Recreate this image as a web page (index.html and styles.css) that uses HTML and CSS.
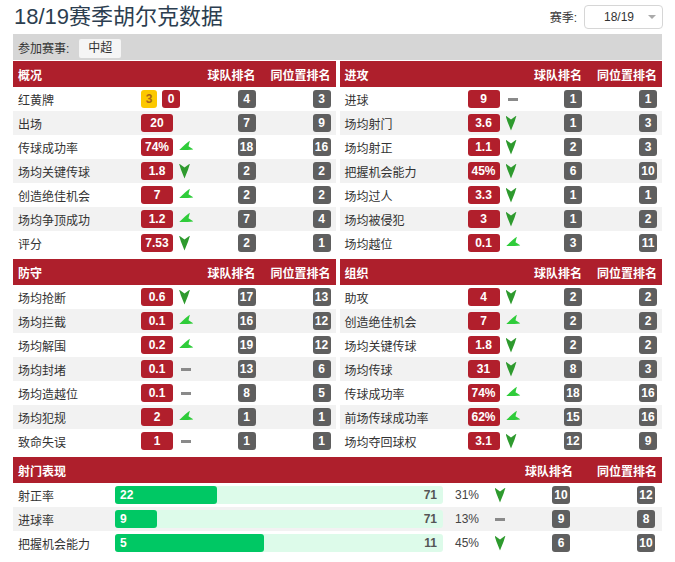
FILE: index.html
```html
<!DOCTYPE html>
<html lang="zh">
<head>
<meta charset="utf-8">
<title>18/19赛季胡尔克数据</title>
<link rel="stylesheet" href="styles.css">
</head>
<body>
<div class="page">
  <div class="topbar">
    <h1 class="title">18/19赛季胡尔克数据</h1>
    <div class="season">
      <span class="season-label">赛季:</span>
      <div class="select"><span class="select-value">18/19</span><span class="caret"></span></div>
    </div>
  </div>

  <div class="comp-bar">
    <span class="comp-label">参加赛事:</span>
    <span class="chip">中超</span>
  </div>

  <div class="tables">
    <!-- 概况 -->
    <div class="table">
      <div class="thead"><span class="th-title">概况</span><span class="th">球队排名</span><span class="th">同位置排名</span></div>
      <div class="row"><span class="label">红黄牌</span><span class="val"><span class="card yellow">3</span><span class="card red">0</span></span><span class="rk"><b>4</b></span><span class="rk"><b>3</b></span></div>
      <div class="row"><span class="label">出场</span><span class="val"><span class="badge">20</span></span><span class="rk"><b>7</b></span><span class="rk"><b>9</b></span></div>
      <div class="row"><span class="label">传球成功率</span><span class="val"><span class="badge">74%</span><i class="ar side"></i></span><span class="rk"><b>18</b></span><span class="rk"><b>16</b></span></div>
      <div class="row"><span class="label">场均关键传球</span><span class="val"><span class="badge">1.8</span><i class="ar down"></i></span><span class="rk"><b>2</b></span><span class="rk"><b>2</b></span></div>
      <div class="row"><span class="label">创造绝佳机会</span><span class="val"><span class="badge">7</span><i class="ar side"></i></span><span class="rk"><b>2</b></span><span class="rk"><b>2</b></span></div>
      <div class="row"><span class="label">场均争顶成功</span><span class="val"><span class="badge">1.2</span><i class="ar side"></i></span><span class="rk"><b>7</b></span><span class="rk"><b>4</b></span></div>
      <div class="row"><span class="label">评分</span><span class="val"><span class="badge">7.53</span><i class="ar down"></i></span><span class="rk"><b>2</b></span><span class="rk"><b>1</b></span></div>
    </div>

    <!-- 进攻 -->
    <div class="table">
      <div class="thead"><span class="th-title">进攻</span><span class="th">球队排名</span><span class="th">同位置排名</span></div>
      <div class="row"><span class="label">进球</span><span class="val"><span class="badge">9</span><i class="dash"></i></span><span class="rk"><b>1</b></span><span class="rk"><b>1</b></span></div>
      <div class="row"><span class="label">场均射门</span><span class="val"><span class="badge">3.6</span><i class="ar down"></i></span><span class="rk"><b>1</b></span><span class="rk"><b>3</b></span></div>
      <div class="row"><span class="label">场均射正</span><span class="val"><span class="badge">1.1</span><i class="ar down"></i></span><span class="rk"><b>2</b></span><span class="rk"><b>3</b></span></div>
      <div class="row"><span class="label">把握机会能力</span><span class="val"><span class="badge">45%</span><i class="ar down"></i></span><span class="rk"><b>6</b></span><span class="rk"><b>10</b></span></div>
      <div class="row"><span class="label">场均过人</span><span class="val"><span class="badge">3.3</span><i class="ar down"></i></span><span class="rk"><b>1</b></span><span class="rk"><b>1</b></span></div>
      <div class="row"><span class="label">场均被侵犯</span><span class="val"><span class="badge">3</span><i class="ar down"></i></span><span class="rk"><b>1</b></span><span class="rk"><b>2</b></span></div>
      <div class="row"><span class="label">场均越位</span><span class="val"><span class="badge">0.1</span><i class="ar side"></i></span><span class="rk"><b>3</b></span><span class="rk"><b>11</b></span></div>
    </div>

    <!-- 防守 -->
    <div class="table">
      <div class="thead"><span class="th-title">防守</span><span class="th">球队排名</span><span class="th">同位置排名</span></div>
      <div class="row"><span class="label">场均抢断</span><span class="val"><span class="badge">0.6</span><i class="ar down"></i></span><span class="rk"><b>17</b></span><span class="rk"><b>13</b></span></div>
      <div class="row"><span class="label">场均拦截</span><span class="val"><span class="badge">0.1</span><i class="ar side"></i></span><span class="rk"><b>16</b></span><span class="rk"><b>12</b></span></div>
      <div class="row"><span class="label">场均解围</span><span class="val"><span class="badge">0.2</span><i class="ar side"></i></span><span class="rk"><b>19</b></span><span class="rk"><b>12</b></span></div>
      <div class="row"><span class="label">场均封堵</span><span class="val"><span class="badge">0.1</span><i class="dash"></i></span><span class="rk"><b>13</b></span><span class="rk"><b>6</b></span></div>
      <div class="row"><span class="label">场均造越位</span><span class="val"><span class="badge">0.1</span><i class="dash"></i></span><span class="rk"><b>8</b></span><span class="rk"><b>5</b></span></div>
      <div class="row"><span class="label">场均犯规</span><span class="val"><span class="badge">2</span><i class="ar side"></i></span><span class="rk"><b>1</b></span><span class="rk"><b>1</b></span></div>
      <div class="row"><span class="label">致命失误</span><span class="val"><span class="badge">1</span><i class="dash"></i></span><span class="rk"><b>1</b></span><span class="rk"><b>1</b></span></div>
    </div>

    <!-- 组织 -->
    <div class="table">
      <div class="thead"><span class="th-title">组织</span><span class="th">球队排名</span><span class="th">同位置排名</span></div>
      <div class="row"><span class="label">助攻</span><span class="val"><span class="badge">4</span><i class="ar down"></i></span><span class="rk"><b>2</b></span><span class="rk"><b>2</b></span></div>
      <div class="row"><span class="label">创造绝佳机会</span><span class="val"><span class="badge">7</span><i class="ar side"></i></span><span class="rk"><b>2</b></span><span class="rk"><b>2</b></span></div>
      <div class="row"><span class="label">场均关键传球</span><span class="val"><span class="badge">1.8</span><i class="ar down"></i></span><span class="rk"><b>2</b></span><span class="rk"><b>2</b></span></div>
      <div class="row"><span class="label">场均传球</span><span class="val"><span class="badge">31</span><i class="ar down"></i></span><span class="rk"><b>8</b></span><span class="rk"><b>3</b></span></div>
      <div class="row"><span class="label">传球成功率</span><span class="val"><span class="badge">74%</span><i class="ar side"></i></span><span class="rk"><b>18</b></span><span class="rk"><b>16</b></span></div>
      <div class="row"><span class="label">前场传球成功率</span><span class="val"><span class="badge">62%</span><i class="ar side"></i></span><span class="rk"><b>15</b></span><span class="rk"><b>16</b></span></div>
      <div class="row"><span class="label">场均夺回球权</span><span class="val"><span class="badge">3.1</span><i class="ar down"></i></span><span class="rk"><b>12</b></span><span class="rk"><b>9</b></span></div>
    </div>
  </div>

  <!-- 射门表现 -->
  <div class="shoot">
    <div class="shead"><span class="th-title sh-title">射门表现</span><span class="th">球队排名</span><span class="th th-pos">同位置排名</span></div>
    <div class="srow">
      <span class="label">射正率</span>
      <span class="track"><span class="fill" style="width:31%">22</span><span class="total">71</span></span>
      <span class="pct">31%</span>
      <span class="trend"><i class="ar down"></i></span>
      <span class="rk rk-team"><b>10</b></span>
      <span class="rk rk-pos"><b>12</b></span>
    </div>
    <div class="srow">
      <span class="label">进球率</span>
      <span class="track"><span class="fill" style="width:12.7%">9</span><span class="total">71</span></span>
      <span class="pct">13%</span>
      <span class="trend"><i class="dash"></i></span>
      <span class="rk rk-team"><b>9</b></span>
      <span class="rk rk-pos"><b>8</b></span>
    </div>
    <div class="srow">
      <span class="label">把握机会能力</span>
      <span class="track"><span class="fill" style="width:45.4%">5</span><span class="total">11</span></span>
      <span class="pct">45%</span>
      <span class="trend"><i class="ar down"></i></span>
      <span class="rk rk-team"><b>6</b></span>
      <span class="rk rk-pos"><b>10</b></span>
    </div>
  </div>
</div>
</body>
</html>
```

FILE: styles.css
```css
* { box-sizing: border-box; }

html, body {
  margin: 0;
  padding: 0;
  background: #ffffff;
}

body {
  font-family: "Liberation Sans", "Noto Sans CJK SC", sans-serif;
  font-size: 12px;
  color: #333333;
}

.page {
  margin: 0 13px;
  width: 649px;
}

/* top bar */
.topbar {
  height: 34px;
  display: flex;
  align-items: center;
  justify-content: space-between;
}

.title {
  margin: 0;
  padding-left: 1px;
  font-size: 22px;
  font-weight: normal;
  line-height: 34px;
  color: #2c3e50;
  font-family: "Liberation Sans", "Noto Sans CJK SC", sans-serif;
}

.season {
  display: flex;
  align-items: center;
  gap: 7px;
  margin-top: -1px;
}

.season-label {
  font-size: 12px;
  color: #333;
}

.select {
  width: 79px;
  height: 24px;
  border: 1px solid #d6d6d6;
  border-radius: 4px;
  display: flex;
  align-items: center;
  justify-content: space-between;
  padding: 0 6px 0 19px;
  margin-right: -1px;
}

.select-value {
  font-size: 12px;
  color: #333;
}

.caret {
  width: 0;
  height: 0;
  border-left: 4px solid transparent;
  border-right: 4px solid transparent;
  border-top: 4px solid #aaaaaa;
}

/* competition bar */
.comp-bar {
  height: 26px;
  background: #d6d6d6;
  display: flex;
  align-items: center;
  padding-left: 5px;
  gap: 10px;
}

.comp-label {
  color: #333;
  font-size: 12px;
}

.chip {
  background: #f5f5f5;
  height: 19px;
  line-height: 19px;
  padding: 0 9px;
  border-radius: 2px;
  font-size: 12px;
  color: #333;
  margin-top: 2px;
}

/* tables */
.tables {
  margin-top: 1px;
  display: grid;
  grid-template-columns: 1fr 1fr;
  column-gap: 4px;
  row-gap: 4px;
}

.thead {
  height: 26px;
  background: #ae1f2c;
  color: #ffffff;
  display: grid;
  grid-template-columns: 1fr 60px 75px;
  align-items: center;
  padding: 0 5px;
}

.th-title, .th {
  font-weight: bold;
  font-size: 12px;
  color: #ffffff;
}

.th { text-align: right; }

.row {
  height: 24px;
  display: grid;
  grid-template-columns: 123px 1fr 60px 75px;
  align-items: center;
  padding: 0 5px;
}

.row:nth-child(odd) { background: #f2f2f2; }

.label {
  font-size: 12px;
  color: #333;
  white-space: nowrap;
}

.val {
  display: flex;
  align-items: center;
  gap: 6px;
}

.badge, .card {
  display: inline-block;
  height: 18px;
  line-height: 18px;
  border-radius: 3px;
  text-align: center;
  font-weight: bold;
  font-size: 12px;
  color: #ffffff;
}

.badge {
  min-width: 32px;
  padding: 0 2px;
  background: #b11f2c;
}

.card { width: 18px; }
.card.yellow { width: 16px; background: #fcc800; color: #a8661a; }
.card.red { background: #b11f2c; margin-left: -1px; }

.rk {
  display: flex;
  justify-content: flex-end;
}

.rk b {
  display: inline-block;
  min-width: 18px;
  height: 18px;
  line-height: 18px;
  padding: 0 1px;
  border-radius: 3px;
  background: #5f5f5f;
  color: #ffffff;
  font-size: 12px;
  font-weight: bold;
  text-align: center;
}

/* trend icons */
.ar {
  display: inline-block;
  width: 11px;
  height: 15px;
  clip-path: polygon(0 0, 50% 26%, 100% 0, 82% 42%, 50% 100%, 18% 42%);
}

.ar.down { background: #2e9a2e; }

.ar.side {
  background: #2fcc3a;
  transform: rotate(68deg) scale(0.9);
  margin-left: 1px;
}

.dash {
  display: inline-block;
  width: 10px;
  height: 3px;
  background: #8a8a8a;
  margin-left: 2px;
}

/* shooting section */
.shoot {
  margin-top: 4px;
}

.shead, .srow {
  display: grid;
  grid-template-columns: 97px 328px 47px 20px 63px 84px;
  align-items: center;
  padding: 0 5px;
}

.shead {
  height: 26px;
  background: #ae1f2c;
}

.sh-title { grid-column: 1 / 5; }

.srow { height: 24px; }
.srow:nth-child(odd) { background: #f2f2f2; }

.track {
  position: relative;
  display: block;
  height: 18px;
  background: #ddfbea;
  border-radius: 3px;
}

.fill {
  display: block;
  height: 18px;
  line-height: 18px;
  background: #00c864;
  border-radius: 3px;
  color: #ffffff;
  font-weight: bold;
  font-size: 12px;
  padding-left: 5px;
}

.total {
  position: absolute;
  right: 6px;
  top: 0;
  line-height: 18px;
  font-weight: bold;
  font-size: 12px;
  color: #555;
}

.pct {
  padding-left: 12px;
  font-size: 12px;
  color: #444;
}

.trend {
  display: flex;
  justify-content: center;
}

.trend .dash { margin-left: 0; }

.rk-team b { margin-right: 3px; }
.rk-pos b { margin-right: 2px; }
```
